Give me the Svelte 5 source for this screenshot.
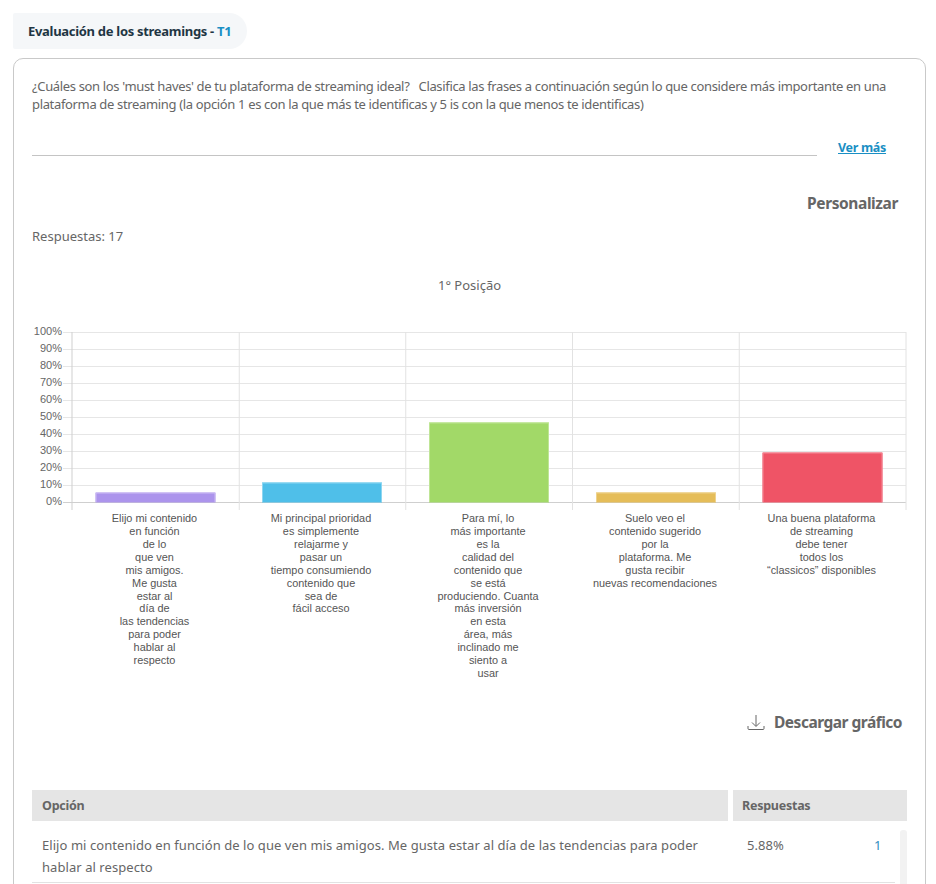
<script lang="ts">
  const ticks = [100, 90, 80, 70, 60, 50, 40, 30, 20, 10, 0];
  const columns = [72, 239.25, 405.75, 572.5, 739.25, 906];

  const bars = [
    {
      x: 95.5,
      value: 5.88,
      fill: "#ac94ec",
      stroke: "#cdbdf3",
      lines: ["Elijo mi contenido", "en función", "de lo", "que ven", "mis amigos.", "Me gusta", "estar al", "día de", "las tendencias", "para poder", "hablar al", "respecto"],
    },
    {
      x: 262,
      value: 11.76,
      fill: "#4fbfe9",
      stroke: "#8dd6f1",
      lines: ["Mi principal prioridad", "es simplemente", "relajarme y", "pasar un", "tiempo consumiendo", "contenido que", "sea de", "fácil acceso"],
    },
    {
      x: 429,
      value: 47.06,
      fill: "#a2d968",
      stroke: "#bfe596",
      lines: ["Para mí, lo", "más importante", "es la", "calidad del", "contenido que", "se está", "produciendo. Cuanta", "más inversión", "en esta", "área, más", "inclinado me", "siento a", "usar"],
    },
    {
      x: 596,
      value: 5.88,
      fill: "#e5bd59",
      stroke: "#eed28d",
      lines: ["Suelo veo el", "contenido sugerido", "por la", "plataforma. Me", "gusta recibir", "nuevas recomendaciones"],
    },
    {
      x: 762.5,
      value: 29.41,
      fill: "#ef5466",
      stroke: "#f48a97",
      lines: ["Una buena plataforma", "de streaming", "debe tener", "todos los", "“classicos” disponibles"],
    },
  ];

  const yOf = (pct: number) => 332.5 + (100 - pct) * 1.7;
</script>

<div class="page">
  <div class="tab">Evaluación de los streamings - <span class="tab-code">T1</span></div>

  <section class="card">
    <p class="question">¿Cuáles son los 'must haves' de tu plataforma de streaming ideal? &nbsp; Clasifica las frases a continuación según lo que considere más importante en una plataforma de streaming (la opción 1 es con la que más te identificas y 5 is con la que menos te identificas)</p>

    <div class="more">
      <div class="more-line"></div>
      <a class="more-link" href="#more">Ver más</a>
    </div>

    <div class="customize">Personalizar</div>
    <div class="answers">Respuestas: 17</div>
    <div class="chart-title">1° Posição</div>

    <svg class="chart" width="936" height="385" viewBox="0 300 936 385">
      {#each ticks as tick}
        <line x1="63" x2="906" y1={yOf(tick)} y2={yOf(tick)} class={tick === 0 ? "axis" : "grid"} />
        <text class="tick" x="62" y={yOf(tick) + 2.5}>{tick}%</text>
      {/each}
      {#each columns as x, i}
        <line x1={x} x2={x} y1="332" y2="510" class={i === 0 ? "axis" : "grid-v"} />
      {/each}
      {#each bars as bar}
        <rect x={bar.x} y={yOf(bar.value)} width="120" height={bar.value * 1.7} fill={bar.fill} />
        <path d="M{bar.x + 0.5} 502V{yOf(bar.value) + 0.5}H{bar.x + 119.5}V502" fill="none" stroke={bar.stroke} />
        {#each bar.lines as line, i}
          <text class="label" x={bar.x + 59} y={522 + i * 12.92}>{line}</text>
        {/each}
      {/each}
    </svg>

    <div class="download">
      <svg width="18" height="17" viewBox="0 0 18 17" fill="none" stroke="#666" stroke-width="1">
        <path d="M9 1v11M5 8.5l4 4 4-4M1 12v2.5q0 1 1 1h14q1 0 1-1V12" />
      </svg>
      <span>Descargar gráfico</span>
    </div>

    <div class="table-head">
      <div class="head-option">Opción</div>
      <div class="head-answers">Respuestas</div>
    </div>
    <div class="table-body">
      <div class="row">
        <div class="row-option">Elijo mi contenido en función de lo que ven mis amigos. Me gusta estar al día de las tendencias para poder hablar al respecto</div>
        <div class="row-pct">5.88%</div>
        <div class="row-count">1</div>
      </div>
      <div class="scrollbar"></div>
    </div>
  </section>
</div>

<style>
  :global(body) {
    background: #fff;
  }

  .page {
    height: 884px;
    overflow: hidden;
    padding-top: 13px;
    box-sizing: border-box;
    font-family: "Noto Sans", "Open Sans", sans-serif;
    color: #666;
  }

  .tab {
    display: inline-block;
    margin-left: 13px;
    height: 36px;
    padding: 0 16px 0 15px;
    line-height: 36px;
    background: #f5f7f9;
    border-radius: 2px 18px 18px 2px;
    font-size: 13px;
    font-weight: 700;
    color: #1f3644;
    letter-spacing: -0.3px;
  }

  .tab-code {
    color: #1a8fc4;
  }

  .card {
    margin: 9px 10px 0 13px;
    padding: 0 18px;
    height: 900px;
    border: 1px solid #c9c9c9;
    border-radius: 10px;
  }

  .question {
    margin: 0;
    padding-top: 18px;
    font-size: 13px;
    line-height: 18px;
    letter-spacing: -0.345px;
  }

  .more {
    display: flex;
    align-items: flex-end;
    margin-top: 22px;
    height: 21px;
  }

  .more-line {
    width: 785px;
    border-bottom: 1px solid #c4c4c4;
  }

  .more-link {
    margin-left: 21px;
    font-size: 12.5px;
    font-weight: 700;
    color: #1a8fc4;
    letter-spacing: -0.3px;
  }

  .customize {
    margin-top: 37px;
    padding-right: 9px;
    text-align: right;
    font-size: 15.5px;
    font-weight: 700;
    line-height: 20px;
    letter-spacing: -0.4px;
  }

  .answers {
    margin-top: 13px;
    font-size: 13px;
    line-height: 20px;
  }

  .chart-title {
    margin-top: 29px;
    text-align: center;
    font-size: 13px;
    line-height: 20px;
  }

  .chart {
    display: block;
    margin: 5px 0 0 -32px;
    font-family: "Liberation Sans", Arial, sans-serif;
  }

  .grid {
    stroke: #e6e6e6;
  }

  .grid-v {
    stroke: #e2e2e2;
  }

  .axis {
    stroke: #cfcfcf;
  }

  .tick {
    font-size: 11px;
    fill: #666;
    text-anchor: end;
  }

  .label {
    font-size: 10.9px;
    fill: #555;
    text-anchor: middle;
  }

  .download {
    display: flex;
    align-items: center;
    justify-content: flex-end;
    gap: 9px;
    margin-top: 26px;
    padding-right: 5px;
    font-size: 15.5px;
    font-weight: 700;
    letter-spacing: -0.5px;
  }

  .table-head {
    display: flex;
    gap: 5px;
    margin-top: 57px;
    font-size: 12.5px;
    font-weight: 700;
    line-height: 31px;
    letter-spacing: -0.25px;
    width: 875px;
  }

  .head-option {
    width: 696px;
    padding-left: 10px;
    box-sizing: border-box;
    background: #e5e5e5;
  }

  .head-answers {
    flex: 1;
    padding-left: 9px;
    background: #e5e5e5;
  }

  .table-body {
    position: relative;
    width: 875px;
    margin-top: 9px;
  }

  .row {
    display: flex;
    width: 863px;
    padding: 4px 0 4px;
    border-bottom: 1px solid #e2e2e2;
    font-size: 13px;
    line-height: 22px;
    letter-spacing: 0.06px;
  }

  .row-option {
    width: 680px;
    padding-left: 10px;
    flex: none;
  }

  .row-pct {
    margin-left: 25px;
    width: 127px;
  }

  .row-count {
    color: #2f8cc0;
  }

  .scrollbar {
    position: absolute;
    right: 0;
    top: 0;
    width: 7px;
    height: 80px;
    background: #f2f2f2;
    border-radius: 3px;
  }
</style>
